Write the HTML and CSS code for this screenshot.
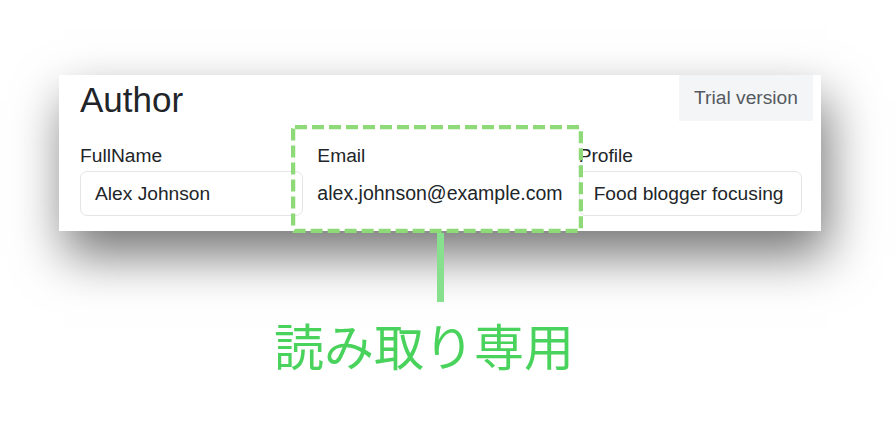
FILE: index.html
```html
<!DOCTYPE html>
<html lang="ja">
<head>
<meta charset="utf-8">
<link rel="stylesheet" href="styles.css">
</head>
<body>
<div class="stage">
  <div class="card">
    <div class="card-head">
      <h3 class="title">Author</h3>
      <div class="trial">Trial version</div>
    </div>
    <div class="fields">
      <div class="field">
        <label class="label">FullName</label>
        <div class="input">Alex Johnson</div>
      </div>
      <div class="field">
        <label class="label">Email</label>
        <div class="plain">alex.johnson@example.com</div>
      </div>
      <div class="field">
        <label class="label">Profile</label>
        <div class="input">Food blogger focusing</div>
      </div>
    </div>
  </div>
  <svg class="callout" width="292" height="108" viewBox="0 0 292 108">
    <rect x="2" y="2" width="288" height="104" rx="2" ry="2" fill="none" stroke="#8fda78" stroke-width="4.5" stroke-dasharray="12 5"/>
  </svg>
  <div class="connector"></div>
  <div class="note">読み取り専用</div>
</div>
</body>
</html>
```

FILE: styles.css
```css
html, body {
  margin: 0;
  padding: 0;
  background: #ffffff;
}

body {
  width: 895px;
  height: 430px;
  overflow: hidden;
  font-family: "Liberation Sans", Arial, sans-serif;
  color: #212529;
}

.stage {
  position: relative;
  width: 895px;
  height: 430px;
  padding: 75px 0 0 59px;
  box-sizing: border-box;
}

.card {
  width: 762px;
  height: 156px;
  box-sizing: border-box;
  background: #ffffff;
  padding: 0 19px 0 21px;
  box-shadow: 6px 24px 48px rgba(0, 0, 0, 0.55);
  display: flex;
  flex-direction: column;
}

.card-head {
  display: flex;
  justify-content: space-between;
  align-items: flex-start;
  height: 62px;
  margin-right: -11px;
}

.title {
  margin: 0;
  padding-top: 5px;
  font-size: 35px;
  font-weight: 400;
  line-height: 40px;
  color: #212529;
}

.trial {
  width: 134px;
  height: 46px;
  background: #f4f5f7;
  color: #555a60;
  font-size: 19.2px;
  line-height: 46px;
  text-align: center;
}

.fields {
  display: grid;
  grid-template-columns: 1fr auto 1fr;
  column-gap: 14px;
}

.field {
  display: flex;
  flex-direction: column;
}

.label {
  font-size: 19.2px;
  line-height: 22px;
  height: 22px;
  margin-top: 8px;
  margin-bottom: 4px;
  color: #212529;
}

.input {
  height: 45px;
  box-sizing: border-box;
  border: 1px solid #e3e5e8;
  border-radius: 7px;
  padding: 0 14px;
  font-size: 19.2px;
  line-height: 43px;
  white-space: nowrap;
  overflow: hidden;
}

.plain {
  height: 45px;
  font-size: 19.5px;
  line-height: 45px;
  white-space: nowrap;
  padding-right: 2px;
}

.callout {
  position: absolute;
  left: 291px;
  top: 125px;
  display: block;
}

.connector {
  position: absolute;
  left: 437px;
  top: 233px;
  width: 7px;
  height: 69px;
  background: #86e08d;
}

.note {
  position: absolute;
  left: 274px;
  top: 314px;
  font-family: "Noto Sans CJK JP", sans-serif;
  font-size: 50px;
  font-weight: 400;
  line-height: 60px;
  color: #4ad35c;
  white-space: nowrap;
}
```
